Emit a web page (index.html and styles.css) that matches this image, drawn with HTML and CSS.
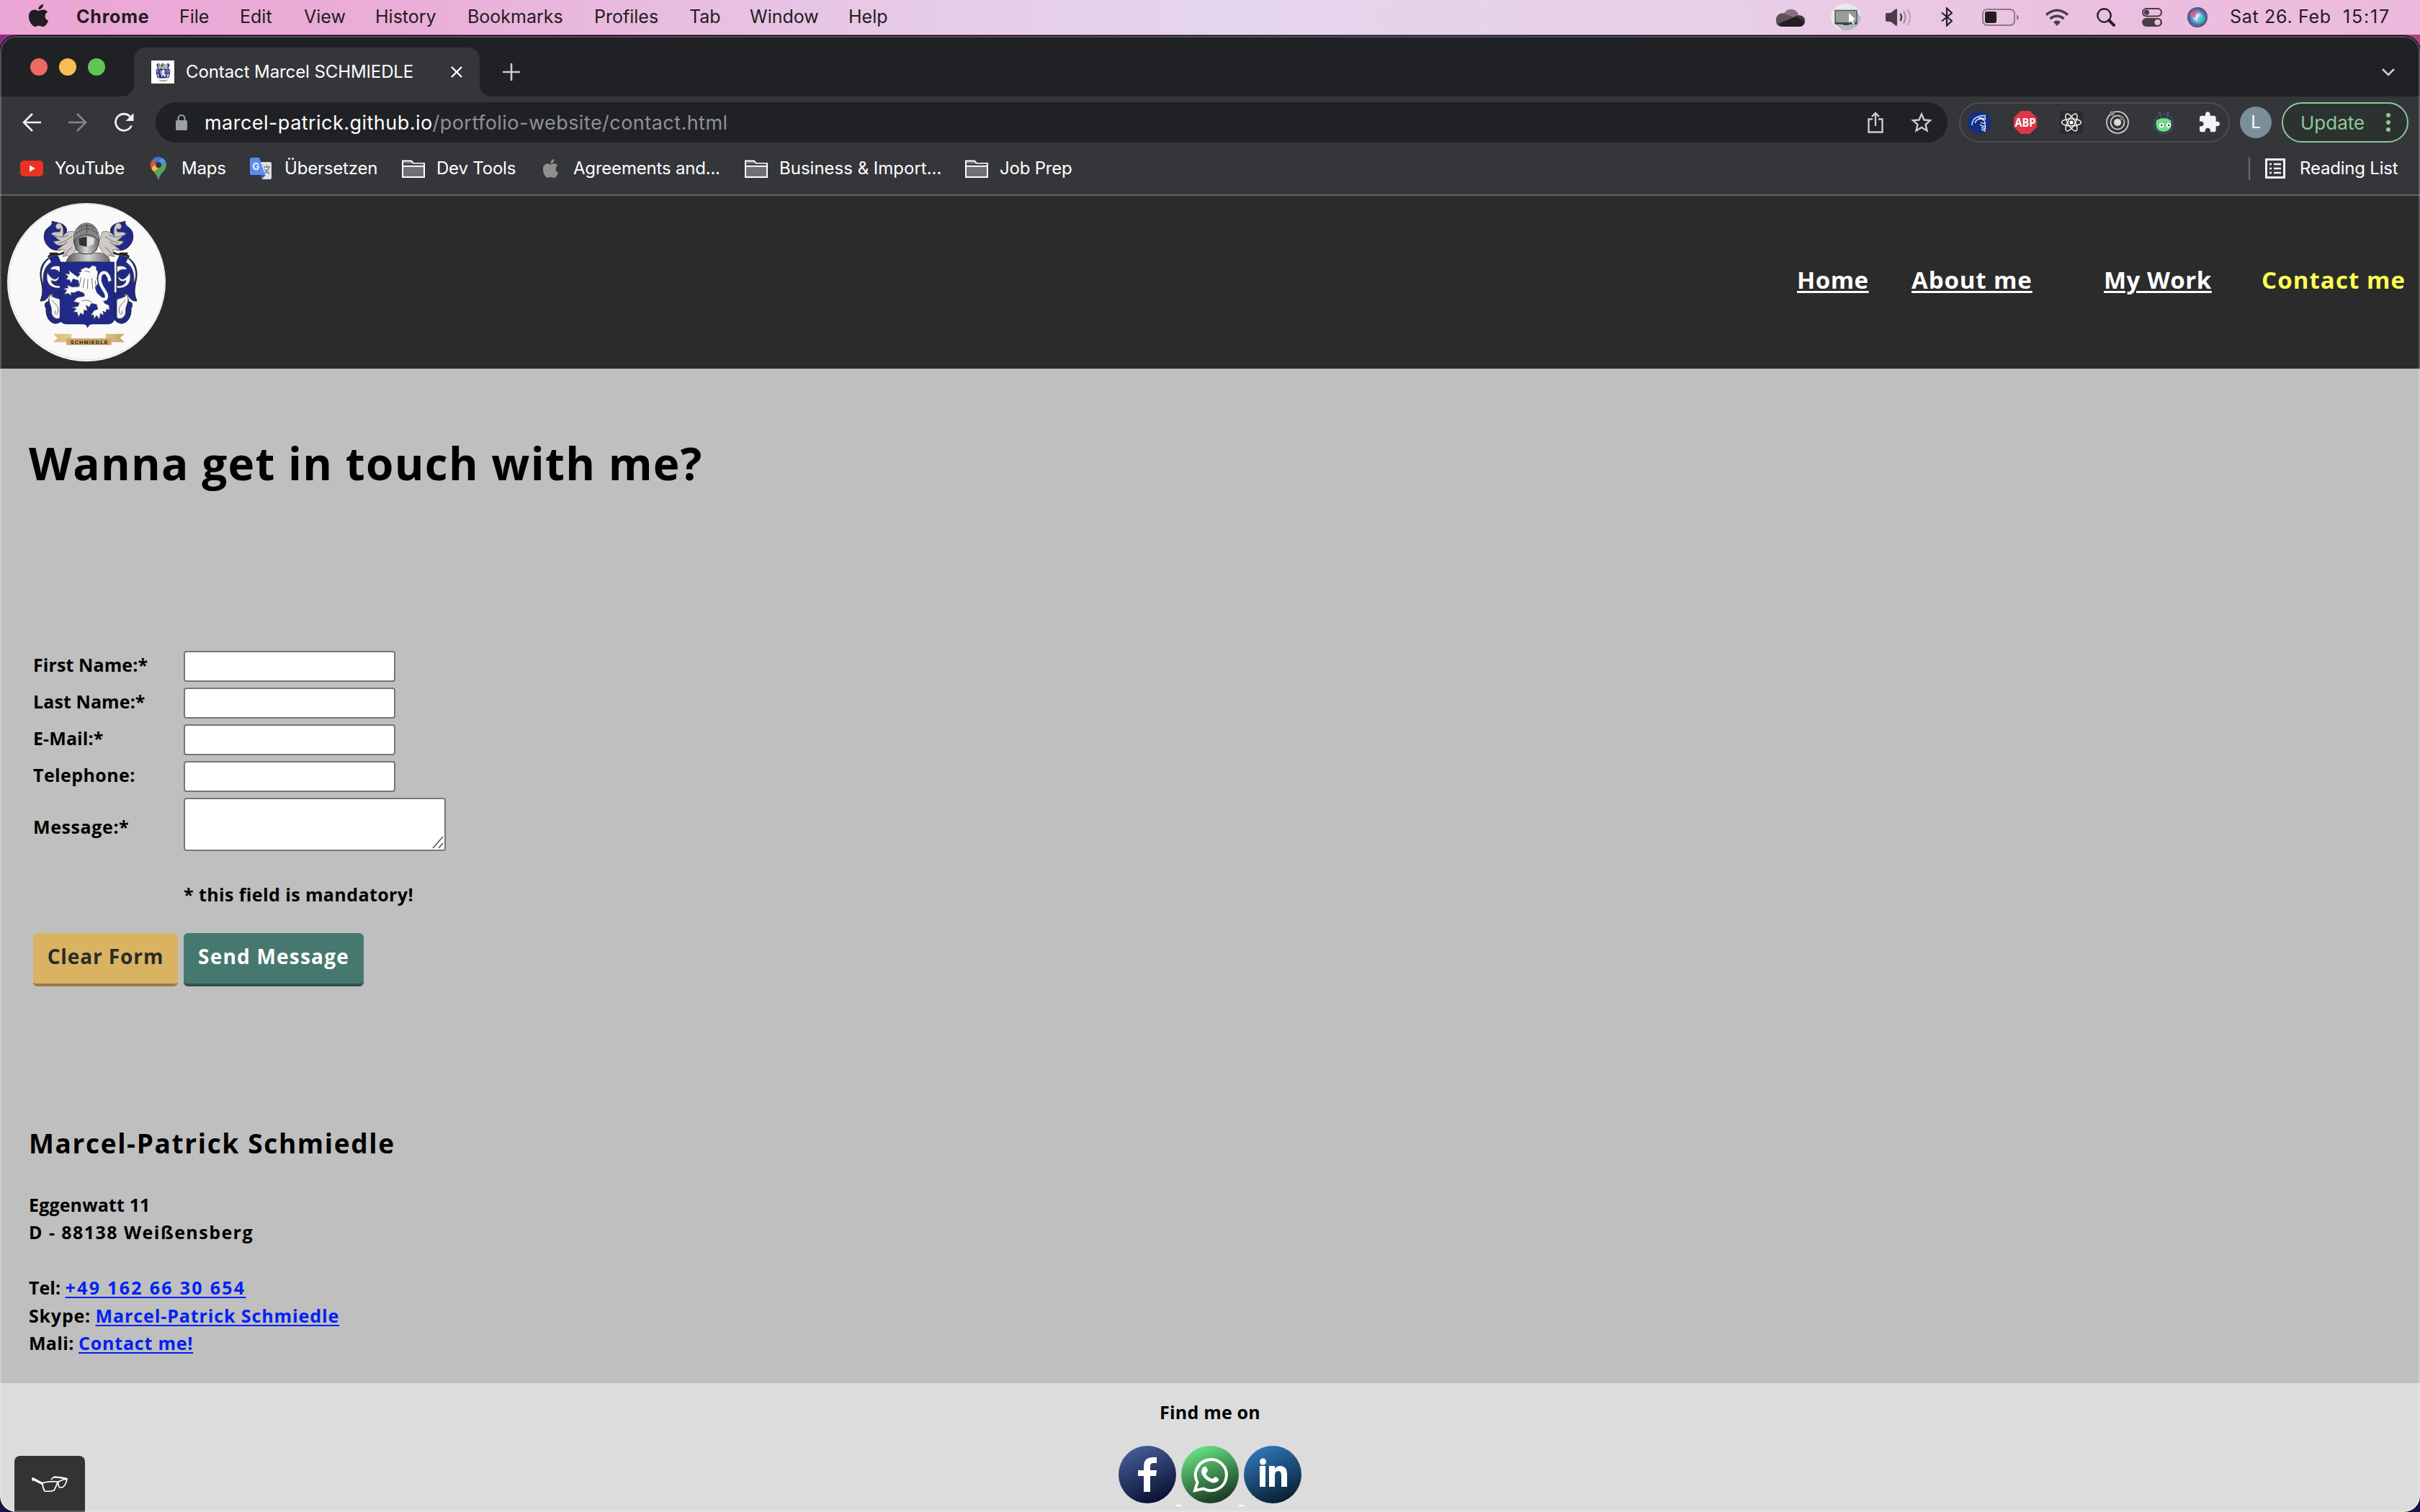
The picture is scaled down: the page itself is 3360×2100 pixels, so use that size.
FILE: index.html
```html
<!DOCTYPE html>
<html lang="en">
<head>
<meta charset="utf-8">
<title>Contact Marcel SCHMIEDLE</title>
<link rel="stylesheet" href="styles.css">
</head>
<body>
<svg class="defs" width="0" height="0" aria-hidden="true">
  <defs>
    <linearGradient id="steel" x1="0" x2="1"><stop offset="0" stop-color="#555"/><stop offset=".5" stop-color="#d5d5d5"/><stop offset="1" stop-color="#666"/></linearGradient>
    <linearGradient id="gold" x1="0" x2="1"><stop offset="0" stop-color="#d9b87c"/><stop offset=".5" stop-color="#f1e0b8"/><stop offset="1" stop-color="#c9a063"/></linearGradient>
    <linearGradient id="fb" x1=".3" y1="0" x2=".7" y2="1"><stop offset="0" stop-color="#455d99"/><stop offset="1" stop-color="#070f2e"/></linearGradient>
    <linearGradient id="wa" x1=".3" y1="0" x2=".7" y2="1"><stop offset="0" stop-color="#68e685"/><stop offset="1" stop-color="#17301b"/></linearGradient>
    <linearGradient id="li" x1=".3" y1="0" x2=".7" y2="1"><stop offset="0" stop-color="#2e78b8"/><stop offset="1" stop-color="#081c30"/></linearGradient>
    <radialGradient id="siri"><stop offset="0" stop-color="#fff"/><stop offset=".3" stop-color="#b9d8ee"/><stop offset=".6" stop-color="#4a8fc0"/><stop offset="1" stop-color="#4d4a78"/></radialGradient>
    <g id="mantle">
      <path d="M250 262C205 270 175 225 186 190 192 165 222 165 216 142L232 146C262 150 284 165 276 190L300 196 312 232Z" fill="#20298a" stroke="#222" stroke-width="3"/>
      <path d="M312 186C284 180 270 192 262 205 270 160 250 142 238 152 222 165 240 182 252 172 256 200 226 176 212 196 226 198 232 214 250 222L222 226C238 250 262 246 280 228L236 262C250 262 262 258 268 262L262 290 284 284 290 300 330 240Z" fill="#cfc8c6" stroke="#555" stroke-width="2"/>
      <path d="M226 200Q250 216 284 200M244 236Q275 225 300 205M270 285Q280 262 300 250" fill="none" stroke="#6d6868" stroke-width="3"/>
      <path d="M240 285C195 285 165 320 168 370 172 410 186 430 168 474 190 476 200 460 206 446 224 445 240 450 252 460V312Z" fill="#20298a" stroke="#222" stroke-width="3"/>
      <path d="M206 296C168 326 166 372 182 405 176 360 186 330 214 312ZM252 330C226 322 208 335 210 344 230 340 244 346 250 358ZM198 352C186 400 210 424 252 420V410C228 414 214 402 214 388 228 398 246 392 248 366 240 382 228 388 216 378 206 370 200 362 198 352Z" fill="#f5f5f5" stroke="#222" stroke-width="2"/>
      <path d="M202 478C186 474 184 496 192 504 190 540 206 566 232 568 246 566 256 560 262 550V440C230 440 200 455 202 478Z" fill="#20298a" stroke="#222" stroke-width="3"/>
      <path d="M208 448C196 480 218 494 214 520 216 546 244 558 252 540V470C246 462 226 464 208 448Z" fill="#f5f5f5" stroke="#222" stroke-width="2"/>
      <path d="M216 470C234 490 248 500 240 524 230 536 224 520 232 514" fill="none" stroke="#333" stroke-width="2"/>
      <path d="M200 290C225 270 240 290 266 272M206 276H240" fill="none" stroke="#222" stroke-width="8"/>
    </g>
    <g id="crest">
      <use href="#mantle"/>
      <use href="#mantle" transform="matrix(-1 0 0 1 738 0)"/>
      <path d="M276 318C276 290 300 278 318 274H418C440 280 460 292 458 318Q366 300 276 318Z" fill="url(#steel)" stroke="#333" stroke-width="2"/>
      <path d="M250 312H476V548Q474 568 450 570H384Q368 572 365 586 362 572 346 570H276Q252 568 250 548Z" fill="#20298a" stroke="#15194f" stroke-width="2"/>
      <path d="M308 230C302 180 330 150 360 150 392 150 416 178 412 230L402 262 380 278H342L318 262Z" fill="url(#steel)" stroke="#333" stroke-width="3"/>
      <path d="M308 222C304 180 330 150 360 150 392 150 416 180 412 222Q362 186 308 222Z" fill="#85868a"/>
      <path d="M328 214Q345 206 362 206V248Q340 246 330 238Z" fill="#333"/>
      <path d="M362 206Q380 206 394 214L390 238 362 248Z" fill="#ddd"/>
      <path d="M308 222Q362 172 412 222M314 196Q362 150 408 196M328 172Q362 146 394 172M362 152V190" fill="none" stroke="#444" stroke-width="3"/>
      <path d="M336 344L356 334 372 338 384 326 400 330 402 346 408 352 404 380 408 402 396 418 404 440 424 460 436 484 454 492 456 512 444 508 440 522 428 516 432 534 418 526 414 550 402 534 392 550 390 532 378 534 392 514 408 508 402 488 380 484 372 500 358 492 364 514 350 512 348 532 336 524 328 540 320 520 306 520 318 506 300 502 326 496 330 482 306 476 322 460 352 454 350 442 326 432 308 440 296 438 296 452 284 442 268 446 278 430 264 422 284 420 280 408 302 416 330 414 326 388 304 382 296 400 290 386 276 384 284 372 270 360 290 362 286 346 304 360 324 374 334 362 326 356 340 352Z" fill="#fafafa" stroke="#555" stroke-width="2"/>
      <path d="M404 450C430 478 450 470 442 444 430 420 412 404 416 376 420 350 444 352 448 366 456 372 454 382 458 392" fill="none" stroke="#fafafa" stroke-width="13"/>
      <path d="M338 376L330 412M352 380L346 420M366 382L364 424M382 378L386 424M396 388L400 416M352 348L376 354M340 474Q360 466 382 478" fill="none" stroke="#777" stroke-width="3"/>
      <path d="M222 611H298V646H222L240 628ZM518 611H440V646H518L500 628Z" fill="url(#gold)"/>
      <path d="M276 630H464V658H276Z" fill="#cda668"/>
      <text x="293" y="654" font-size="22" font-weight="700" textLength="156" font-family="Liberation Sans, sans-serif" fill="#222">SCHMIEDLE</text>
    </g>
    <path id="apple" d="M18.71 19.5c-.83 1.24-1.71 2.45-3.05 2.47-1.34.03-1.77-.79-3.29-.79-1.53 0-2 .77-3.27.82-1.31.05-2.3-1.32-3.14-2.53C4.25 17 2.94 12.45 4.7 9.39c.87-1.52 2.43-2.48 4.12-2.51 1.28-.02 2.5.87 3.29.87.78 0 2.26-1.07 3.81-.91.65.03 2.47.26 3.64 1.98-.09.06-2.17 1.28-2.15 3.81.03 3.02 2.65 4.03 2.68 4.04-.03.07-.42 1.44-1.38 2.83M13 3.5c.73-.83 1.94-1.46 2.94-1.5.13 1.17-.34 2.35-1.04 3.19-.69.85-1.83 1.51-2.95 1.42-.15-1.15.41-2.35 1.05-3.11z"/>
    <g id="folder"><path d="M1 5V1.5H13L16 5H31V24H1Z" fill="#6f7073" stroke="#fff" stroke-width="2"/><path d="M2 5.500H30V8H2Z" fill="#35363a"/><path d="M1 8.800H31" stroke="#fff" stroke-width="2"/></g>
  </defs>
</svg>

<div class="menubar">
  <svg class="i-apple" width="27" height="31" viewBox="4 2 16 20" preserveAspectRatio="none" fill="#231c22"><use href="#apple"/></svg>
  <b>Chrome</b><span>File</span><span>Edit</span><span>View</span><span>History</span><span>Bookmarks</span><span>Profiles</span><span>Tab</span><span>Window</span><span>Help</span>
  <svg width="40" height="26" viewBox="0 0 40 26"><path d="M10 10A11 11 0 0 1 31 9L20 18Z" fill="#86727f"/><path d="M0 18A9 9 0 0 1 14 9L31 15 8 26Q0 26 0 18Z" fill="#5f4f5b"/><path d="M14 18L30 10Q40 10 40 18 38 26 30 26Z" fill="#423640"/><path d="M3 22L28 12 40 20Q38 26 32 26H8Q5 25 3 22Z" fill="#231c22"/></svg>
  <svg width="42" height="38" viewBox="0 0 42 38"><ellipse cx="21" cy="19" rx="21" ry="19" fill="#e9e9ee"/><path d="M6 29L16 37Q21 39 30 36 41 30 42 19L36 11Z" fill="#b7bac0"/><path d="M6 9.500H36V28H6Z" fill="#9b9c9a" stroke="#555" stroke-width="1.500"/><path d="M6 26H36V28.500H25V30H17V28.500H6Z" fill="#444"/><path d="M25 13V27L28 24 31 29 33 28 30 23 34 22Z" fill="#fff"/></svg>
  <svg width="37" height="26" viewBox="0 0 37 26" fill="none"><path d="M0 9Q0 7 2 7H7L14 1.500Q16 0 16 3V23Q16 26 14 24.500L7 19H2Q0 19 0 17Z" fill="#4a3d47"/><path d="M20.500 8Q23.500 13 20.500 18" stroke="#4a3d47" stroke-width="2.500"/><path d="M25 4.500Q30 13 25 21.500" stroke="#a58a9c" stroke-width="2.300"/><path d="M30 1.500Q38 13 30 24.500" stroke="#c3a3b8" stroke-width="2.300"/></svg>
  <svg width="16" height="27" viewBox="0 0 16 27" fill="none" stroke="#231c22" stroke-width="2.200"><path d="M1 7.500L15 19 8 25.500V1.500L15 8 1 19.500"/></svg>
  <svg width="52" height="24" viewBox="0 0 52 24"><rect x="1" y="1" width="44" height="22" rx="6" fill="none" stroke="#8f7888" stroke-width="2"/><rect x="4" y="4" width="16" height="16" rx="3" fill="#231c22"/><path d="M48 8Q54 12 48 16Z" fill="#8f7888"/></svg>
  <svg width="32" height="24" viewBox="0 0 32 24" fill="none" stroke="#4a3d47" stroke-width="3.600"><path d="M1 8.500Q16-4 31 8.500M6.500 14Q16 6.500 25.500 14"/><path d="M11 18.500Q16 14.500 21 18.500L16 24Z" fill="#4a3d47" stroke="none"/></svg>
  <svg width="26" height="26" viewBox="0 0 26 26" fill="none" stroke="#231c22"><circle cx="10.500" cy="10.500" r="9.200" stroke-width="2.400"/><path d="M17 17L24 24" stroke-width="4" stroke-linecap="round"/></svg>
  <svg width="28" height="26" viewBox="0 0 28 26"><rect x="1" y="1" width="26" height="10.500" rx="5.200" fill="none" stroke="#4a3d47" stroke-width="2"/><circle cx="6.500" cy="6.200" r="3.600" fill="#4a3d47"/><rect y="14" width="28" height="12" rx="6" fill="#4a3d47"/><circle cx="21.500" cy="20" r="4" fill="#ebbfe0"/></svg>
  <svg width="28" height="28" viewBox="0 0 28 28"><circle cx="14" cy="14" r="14" fill="url(#siri)"/><path d="M2 12Q8 2 18 5 10 8 12 14Z" fill="#e0588d" opacity=".8"/><path d="M14 14Q22 10 25 15 22 22 16 23Z" fill="#35c0c0" opacity=".7"/></svg>
  <span class="date">Sat 26. Feb</span><span class="time">15:17</span>
</div>

<div class="window">
  <div class="tabstrip">
    <div class="lights"><i></i><i></i><i></i></div>
    <div class="tab">
      <svg class="favicon" width="32" height="32" viewBox="30 66 660 660"><path d="M30 66H690V726H30Z" fill="#fff"/><use href="#crest"/></svg>
      <span>Contact Marcel SCHMIEDLE</span>
      <svg width="16" height="16" viewBox="0 0 16 16" stroke="#fff" stroke-width="2.400"><path d="M1 1L15 15M15 1L1 15"/></svg>
    </div>
    <svg class="plus" width="24" height="24" viewBox="0 0 24 24" stroke="#c9cbce" stroke-width="2.600"><path d="M12 0V24M0 12H24"/></svg>
    <svg class="chev" width="18" height="11" viewBox="0 0 18 11" fill="none" stroke="#c9cbce" stroke-width="2.600"><path d="M1 1L9 9 17 1"/></svg>
  </div>
  <div class="toolbar">
    <svg width="26" height="26" viewBox="0 0 26 26" fill="none" stroke="#f1f1f3" stroke-width="2.600"><path d="M26 13H2M14 1L2 13 14 25"/></svg>
    <svg width="26" height="26" viewBox="0 0 26 26" fill="none" stroke="#85868a" stroke-width="2.600"><path d="M0 13H24M12 1L24 13 12 25"/></svg>
    <svg width="28" height="28" viewBox="0 0 28 28"><path d="M24.500 18.500A11.500 11.500 0 1 1 22.500 6" fill="none" stroke="#f1f1f3" stroke-width="2.800"/><path d="M27.500 1V12H16.500Z" fill="#f1f1f3"/></svg>
    <div class="omnibox">
      <svg width="16" height="22" viewBox="0 0 16 22"><path d="M3.500 9V5.500A4.500 4.500 0 0 1 12.500 5.500V9" fill="none" stroke="#9aa0a6" stroke-width="2"/><rect y="8" width="16" height="14" rx="2" fill="#9aa0a6"/></svg>
      <span class="url"><span class="host">marcel-patrick.github.io</span><span class="path">/portfolio-website/contact.html</span></span>
      <svg class="share" width="22" height="30" viewBox="0 0 22 30" fill="none" stroke="#c9cbce" stroke-width="2.400"><path d="M7 10.500H1.500V28.500H20.500V10.500H15M11 20V2M6 7L11 2 16 7"/></svg>
      <svg width="30" height="30" viewBox="0 0 30 30" fill="none" stroke="#c9cbce" stroke-width="2.400"><path d="M15 3.500L18.500 11.500 27 12.300 20.500 18 22.500 26.500 15 22 7.500 26.500 9.500 18 3 12.300 11.500 11.500Z"/></svg>
    </div>
    <div class="exts">
      <svg viewBox="0 0 32 32"><circle cx="16" cy="16" r="16" fill="#132f86"/><path d="M6 20Q6 7 24 6.500L24.500 12M10 17Q12 11 18 11 24 12 24 17 21 18 18 16M24 17Q25 22 24 28L19 25.500M17 19Q20 22 24 21M19 23L24 24.500M24.500 12Q20 9 15 10" fill="none" stroke="#dfe5f5" stroke-width="1.400"/></svg>
      <svg viewBox="0 0 32 32"><path d="M9.500 0H22.500L32 9.500V22.500L22.500 32H9.500L0 22.500V9.500Z" fill="#db3748"/><text x="1.500" y="21.500" font-family="Open Sans, sans-serif" font-size="15.500" font-weight="700" textLength="29" lengthAdjust="spacingAndGlyphs" fill="#fff">ABP</text></svg>
      <svg viewBox="0 0 32 32"><rect width="32" height="32" rx="2" fill="#2a2b2f"/><g fill="none" stroke="#f0f0f0" stroke-width="1.500"><ellipse cx="16" cy="16" rx="13.500" ry="5"/><ellipse cx="16" cy="16" rx="13.500" ry="5" transform="rotate(60 16 16)"/><ellipse cx="16" cy="16" rx="13.500" ry="5" transform="rotate(120 16 16)"/></g><circle cx="16" cy="16" r="2.600" fill="#fff"/></svg>
      <svg viewBox="0 0 32 32" fill="none" stroke="#dcdcdc"><circle cx="16" cy="16" r="15" stroke-width="1.600"/><circle cx="16" cy="16" r="9.500" stroke-width="1.600"/><circle cx="16" cy="16" r="5" fill="#dcdcdc" stroke="none"/><circle cx="8.500" cy="3.500" r="3.200" fill="#858585" stroke="none"/><circle cx="22" cy="10" r="3.200" fill="#6d6d6d" stroke="none"/></svg>
      <svg viewBox="0 0 32 32"><circle cx="16" cy="18" r="13.500" fill="none" stroke="#4b5167" stroke-width="1.200"/><path d="M13 12L11 3M20 12L22 3" stroke="#4b5167" stroke-width="1.500"/><circle cx="10.500" cy="2.500" r="2" fill="#4b5167"/><circle cx="22" cy="2.500" r="2" fill="#4b5167"/><path d="M6 13Q16 7 26 13 29 28 16 29 3 28 6 13Z" fill="#6fdc8c"/><circle cx="13" cy="20" r="3.200" fill="#fff"/><circle cx="23" cy="20" r="3.200" fill="#fff"/><circle cx="13.300" cy="20" r="1.200" fill="#222"/><circle cx="23.300" cy="20" r="1.200" fill="#222"/></svg>
      <svg viewBox="0.500 0 24 24" fill="#f1f3f4"><path d="M20.500 11H19V7c0-1.100-.9-2-2-2h-4V3.500C13 2.120 11.880 1 10.500 1S8 2.120 8 3.500V5H4c-1.100 0-1.990.9-1.990 2v3.800H3.500c1.490 0 2.700 1.210 2.700 2.700s-1.210 2.700-2.700 2.700H2V20c0 1.100.9 2 2 2h3.800v-1.500c0-1.490 1.210-2.700 2.700-2.700 1.490 0 2.700 1.210 2.700 2.700V22H17c1.100 0 2-.9 2-2v-4h1.500c1.380 0 2.500-1.120 2.500-2.500S21.880 11 20.500 11z"/></svg>
    </div>
    <div class="avatar">L</div>
    <div class="update"><span>Update</span><svg width="6" height="26" viewBox="0 0 6 26" fill="#8fc79a"><circle cx="3" cy="3" r="3"/><circle cx="3" cy="13" r="3"/><circle cx="3" cy="23" r="3"/></svg></div>
  </div>
  <div class="bookmarks">
    <svg width="32" height="22" viewBox="0 0 32 22"><rect width="32" height="22" rx="5" fill="#ea3323"/><path d="M13 6.500L21 11 13 15.500Z" fill="#fff"/></svg>
    <span>YouTube</span>
    <svg width="22" height="32" viewBox="0 0 22 32"><path d="M11 0A11 11 0 0 0 2.500 4L8 8.500 16 1.200A11 11 0 0 0 11 0Z" fill="#3f74d9"/><path d="M2.500 4A11 11 0 0 0 1 15.500L8 8.500Z" fill="#dd5144"/><path d="M1 15.500Q3 19 5 21L14 13 8 8.500Z" fill="#f2bb42"/><path d="M22 11Q22 17 16 22 12 27 11 32 9 26 5 21L21 6.500Q22 9 22 11Z" fill="#56a55b"/><path d="M16 1.200Q20 3.500 21 6.500L14 13 8 8.500Z" fill="#5a8ff0"/><circle cx="11" cy="11" r="4.200" fill="#35363a"/></svg>
    <span>Maps</span>
    <svg width="30" height="30" viewBox="0 0 30 30"><path d="M12 6H28Q30 6 30 8V28Q30 30 28 30H17Z" fill="#dedede"/><path d="M15 24H22L16 30Z" fill="#3a55c4"/><path d="M2 0H13L21 24H2Q0 24 0 22V2Q0 0 2 0Z" fill="#5b8def"/><text x="3.500" y="16.500" font-family="Inter, sans-serif" font-size="13" font-weight="600" fill="#fff">G</text><path d="M19 13H28M23.500 11V13M26.500 13Q25 19 19.500 22M20.500 16Q23 20 27 22" fill="none" stroke="#6d8890" stroke-width="1.500"/></svg>
    <span>Übersetzen</span>
    <svg width="32" height="25" viewBox="0 0 32 25"><use href="#folder"/></svg>
    <span>Dev Tools</span>
    <svg width="21" height="26" viewBox="4 2 16 20" preserveAspectRatio="none" fill="#8f8f8f"><use href="#apple"/></svg>
    <span>Agreements and...</span>
    <svg width="32" height="25" viewBox="0 0 32 25"><use href="#folder"/></svg>
    <span class="business">Business &amp; Import...</span>
    <svg width="32" height="25" viewBox="0 0 32 25"><use href="#folder"/></svg>
    <span>Job Prep</span>
    <i class="sep"></i>
    <svg width="28" height="28" viewBox="0 0 28 28"><rect x="1.500" y="1.500" width="25" height="25" fill="none" stroke="#f1f3f4" stroke-width="3"/><path d="M6 8H9M12 8H22M6 14H9M12 14H22M6 20H9M12 20H22" stroke="#f1f3f4" stroke-width="2.600"/></svg>
    <span>Reading List</span>
  </div>

  <header class="site-header">
    <svg class="logo" width="220" height="220" viewBox="30 66 660 660"><circle cx="360" cy="396" r="330" fill="#f9f9f9"/><circle cx="362" cy="394" r="325" fill="none" stroke="#ccc" stroke-width="2"/><use href="#crest"/></svg>
    <nav><a href="#">Home</a><a href="#">About me</a><a href="#">My Work</a><a href="#" class="current">Contact me</a></nav>
  </header>

  <main>
    <h1>Wanna get in touch with me?</h1>
    <form class="contact">
      <label for="first">First Name:*</label><input id="first" type="text">
      <label for="last">Last Name:*</label><input id="last" type="text">
      <label for="mail">E-Mail:*</label><input id="mail" type="text">
      <label for="tel">Telephone:</label><input id="tel" type="text">
      <label class="msg">Message:*</label><div class="area"><svg width="16" height="18" viewBox="0 0 16 18" stroke="#555" stroke-width="1.500"><path d="M1 17L15 1M9 17L15 10"/></svg></div>
      <p class="note">* this field is mandatory!</p>
      <button type="button" class="clear">Clear Form</button><button type="button" class="send">Send Message</button>
    </form>
    <h2>Marcel-Patrick Schmiedle</h2>
    <address>
      <span class="street">Eggenwatt 11</span><br>
      <span class="city">D - 88138 Weißensberg</span><br><br>
      <span class="tel">Tel:</span> <a href="#" class="phone">+49 162 66 30 654</a><br>
      <span class="sk">Skype:</span> <a href="#" class="skype">Marcel-Patrick Schmiedle</a><br>
      <span class="ml">Mali:</span> <a href="#" class="mail">Contact me!</a>
    </address>
  </main>

  <footer>
    <p>Find me on</p>
    <div class="social">
      <a href="#"><svg viewBox="0 0 80 80"><circle cx="40" cy="40" r="40" fill="url(#fb)"/><path d="M35 64V42H27V34H35V29Q35 16 47 16H53V24H48Q44 24 44 29V34H53L52 42H44V64Z" fill="#fff"/></svg></a>
      <a href="#"><svg viewBox="0 0 80 80"><circle cx="40" cy="40" r="40" fill="url(#wa)"/><path d="M19 62L22.500 51A21.500 21.500 0 1 1 31 59.500Z" fill="none" stroke="#fff" stroke-width="4"/><path d="M32 29Q35 28 37 34 36 37 34 39 38 45 44 46L47 43Q53 45 52 48 48 53 42 51 30 46 28 37 28 31 32 29Z" fill="#fff"/></svg></a>
      <a href="#"><svg viewBox="0 0 80 80"><circle cx="40" cy="40" r="40" fill="url(#li)"/><path d="M22 28H30V57H22ZM35 28H43V32Q46 28 50 28 60 28 60 39V57H52V41Q52 35 48 35 43 35 43 41V57H35Z" fill="#fff"/><circle cx="26.500" cy="22" r="4.500" fill="#fff"/></svg></a>
    </div>
  </footer>
  <div class="glasses"><svg width="50" height="22" viewBox="0 0 50 22" fill="none" stroke="#fff" stroke-width="1.700"><path d="M0 3L2 2 16 9.500V13L2 6 1 8Z" fill="#fff" stroke="none"/><path d="M15 9.500Q26 7 36 8 34 15 31 20 25 22 18 21 15 16 15 9.500ZM37 8Q42 5 49 4 48 11 44 15 40 17 38 15 36 11 37 8ZM27 5L31 1"/><path d="M31 1.500Q40 1.500 49 4" stroke-width="2.500"/></svg></div>
</div>
</body>
</html>
```
FILE: styles.css
```css
* { box-sizing: border-box; }
body {
  margin: 0;
  width: 3360px;
  height: 2100px;
  overflow: hidden;
  background: linear-gradient(90deg, #8c2d85, #b46a94 40%, #8d82b5 60%, #a8457c) top / 100% 100px no-repeat, #1c1150;
  font-family: Inter, "Liberation Sans", sans-serif;
}
svg { display: block; flex: none; }
.defs { position: absolute; }

.menubar {
  display: grid;
  grid-template-columns: 66px 143px 84px 89px 99px 128px 176px 132px 84px 137px 1288px 76px 76px 77px 57px 88px 71px 63px 63px 60px 156px 107px;
  padding-left: 40px;
  align-items: center;
  height: 48px;
  padding-bottom: 2px;
  line-height: 44px;
  font-size: 25px;
  color: #231c22;
  background: linear-gradient(90deg, #eba6d5 0, #eaaed8 17%, #e6cbe7 38%, #e4d5ec 50%, #e8d0e8 70%, #ebbfdf 88%, #ecb9dc 100%);
}
.menubar b { font-weight: 700; letter-spacing: .8px; }
.menubar svg { margin-top: 1px; }
.menubar .date { margin-left: -1px; letter-spacing: .7px; }
.menubar .time { letter-spacing: 1.8px; }
.menubar .i-apple { margin-top: -3px; }

/* browser window, with a translucent hairline laid over its edge */
.window {
  position: relative;
  display: flex;
  flex-direction: column;
  height: 2050px;
  margin-top: 2px;
  border-radius: 22px;
  overflow: hidden;
  background: #35363a;
  box-shadow: 0 0 0 1px #000;
}
.window::after {
  content: "";
  position: absolute;
  inset: 0;
  border: 2px solid rgba(255, 255, 255, .22);
  border-radius: 22px;
  pointer-events: none;
}
.tabstrip {
  display: flex;
  height: 84px;
  padding-top: 1px;
  background: #202124;
}
.lights { display: flex; gap: 16px; width: 186px; padding: 30px 0 0 42px; }
.lights i { width: 24px; height: 24px; border-radius: 50%; background: #ec6a5f; }
.lights i:nth-child(2) { background: #f5bf4f; }
.lights i:nth-child(3) { background: #61c654; }
.tab {
  position: relative;
  display: flex;
  align-items: center;
  width: 480px;
  margin-top: 15px;
  padding: 0 24px 1px;
  border-radius: 16px 16px 0 0;
  background: #35363a;
  color: #fff;
  font-size: 24px;
}
.tab::before, .tab::after {
  content: "";
  position: absolute;
  bottom: 0;
  width: 16px;
  height: 16px;
  left: -16px;
  background: radial-gradient(circle at 0 0, transparent 15.500px, #35363a 16px);
}
.tab::after { left: auto; right: -16px; background: radial-gradient(circle at 100% 0, transparent 15.500px, #35363a 16px); }
.tab span { flex: none; width: 384px; padding-left: 16px; letter-spacing: -.1px; }
.plus { margin: 37px 0 0 32px; }
.chev { margin: 44px 35px 0 auto; }

.toolbar {
  display: grid;
  grid-template-columns: 64px 63px 57px 2505px 390px 58px 176px;
  align-items: center;
  height: 72px;
  padding-left: 31px;
}
.omnibox {
  display: flex;
  align-items: center;
  width: 2488px;
  height: 56px;
  margin-left: 1px;
  padding: 0 21px 0 28px;
  border-radius: 28px;
  background: #202124;
  font-size: 27px;
  letter-spacing: .46px;
}
.url { margin-left: 24px; }
.host { color: #fff; }
.path { color: #8f9195; }
.share { margin: 0 38px 0 auto; }
.exts {
  display: flex;
  gap: 32px;
  width: 376px;
  height: 56px;
  padding: 10px;
  border: 2px solid #4b4c50;
  border-radius: 28px;
}
.exts svg { width: 32px; height: 32px; }
.avatar {
  width: 44px;
  height: 44px;
  border-radius: 50%;
  background: #7b8f9b;
  color: #fff;
  font-size: 24px;
  line-height: 44px;
  text-align: center;
}
.update {
  display: flex;
  align-items: center;
  justify-content: space-between;
  height: 56px;
  padding: 0 23px 0 24px;
  border: 2px solid #8fc79a;
  border-radius: 28px;
  background: #2c322f;
  color: #8fc79a;
  font-size: 26px;
}

.bookmarks {
  display: grid;
  grid-template-columns: 48px 133px 43px 95px 48px 163px 48px 148px 42px 238px 48px 258px 48px 1734px 23px 48px 160px;
  align-items: center;
  height: 66px;
  padding: 0 0 8px 28px;
  border-bottom: 2px solid #5f6063;
  background: #35363a;
  color: #fff;
  font-size: 24px;
  line-height: 56px;
  letter-spacing: -.2px;
  white-space: nowrap;
}
.bookmarks .business { letter-spacing: 0; }
.sep { width: 2px; height: 32px; background: #6b6c70; }

.site-header {
  display: flex;
  justify-content: space-between;
  height: 240px;
  padding: 10px 22px 0 10px;
  background: #2b2b2b;
}
.site-header nav {
  display: grid;
  grid-template-columns: 159px 267px 219px 198px;
  padding-top: 88px;
}
nav a, h1, h2, label, .note, button, address, footer p {
  font-family: "Open Sans", "Noto Sans", sans-serif;
  font-weight: 700;
}
nav a {
  justify-self: start;
  color: #fff;
  font-size: 33px;
  line-height: 37px;
  letter-spacing: .7px;
  white-space: nowrap;
  text-decoration-thickness: 3px;
  text-underline-offset: 3px;
}
nav a:nth-child(1), nav a:nth-child(3) { letter-spacing: .5px; }
nav a:nth-child(2) { letter-spacing: .9px; }
nav a.current { color: #fdfd54; text-decoration: none; letter-spacing: 1.100px; }

main {
  height: 1409px;
  padding: 91px 40px 0;
  background: #bfbfbf;
  color: #000;
}
h1 { margin: 0; font-size: 62px; line-height: 80px; letter-spacing: 1.300px; }
.contact {
  display: grid;
  grid-template-columns: 201px 364px;
  grid-template-rows: repeat(4, 44px) 74px 100px 74px;
  gap: 7px 8px;
  margin: 221px 0 0 6px;
}
label { font-size: 25px; line-height: 38px; justify-self: start; letter-spacing: .1px; }
label[for="tel"] { letter-spacing: .4px; }
label.msg { line-height: 81px; letter-spacing: .6px; }
input {
  width: 294px;
  height: 43px;
  border: 2px solid #767676;
  border-radius: 4px;
  background: #fff;
}
.area {
  display: flex;
  justify-content: flex-end;
  align-items: flex-end;
  padding: 1px;
  border: 2px solid #767676;
  border-radius: 4px;
  background: #fff;
}
.note { grid-column: 2; margin: 0; font-size: 25px; line-height: 107px; letter-spacing: .4px; }
button {
  height: 74px;
  padding: 0 0 7px;
  border: 0;
  border-bottom: 4px solid #977d45;
  border-radius: 6px;
  background: #d9b362;
  color: #2b2b2b;
  font-size: 28px;
  letter-spacing: .9px;
}
button.send { width: 250px; border-color: #30534c; background: #47786f; color: #fff; letter-spacing: 1.2px; }
h2 { margin: 193px 0 0; font-size: 37px; line-height: 49px; letter-spacing: 1.650px; }
address { margin-top: 42px; font-size: 25px; line-height: 38.400px; font-style: normal; }
address a { color: #0021f5; text-decoration-thickness: 2px; text-underline-offset: 3px; }
.street { letter-spacing: .150px; }
.city { letter-spacing: 1.450px; }
.phone { letter-spacing: 2.300px; }
.sk { letter-spacing: .8px; }
.skype { letter-spacing: .9px; }
.ml { letter-spacing: .3px; }
.mail { letter-spacing: .8px; }

footer { height: 179px; padding-top: 21px; background: #dcdcdc; }
footer p { margin: 0; font-size: 25px; line-height: 39px; padding-bottom: 1px; letter-spacing: .2px; text-align: center; }
.social { display: flex; justify-content: center; gap: 7px; margin-top: 26px; }
.social a { position: relative; }
.social a:not(:last-child)::after {
  content: "";
  position: absolute;
  right: -7px;
  bottom: -4px;
  width: 7px;
  height: 2px;
  background: #fff;
}
.social svg { width: 80px; height: 80px; }
.glasses {
  position: absolute;
  left: 20px;
  bottom: 0;
  display: flex;
  justify-content: center;
  width: 98px;
  height: 78px;
  padding-top: 28px;
  border-radius: 8px 8px 0 0;
  background: #333;
}
```
